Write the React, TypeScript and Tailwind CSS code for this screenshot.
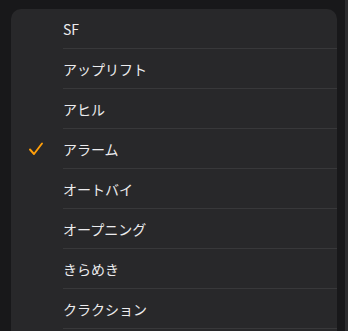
const items = [
  'SF',
  'アップリフト',
  'アヒル',
  'アラーム',
  'オートバイ',
  'オープニング',
  'きらめき',
  'クラクション',
]

const selected = 'アラーム'

function Check() {
  return (
    <svg width="16" height="16" viewBox="0 0 16 16" fill="none">
      <path d="M2 8.5 L6 13 L14 2.5" stroke="#ff9f0a" strokeWidth="1.9" strokeLinecap="round" strokeLinejoin="round" />
    </svg>
  )
}

export default function App() {
  return (
    <div className="relative w-[348px] h-[331px] overflow-hidden bg-[#18181a] pl-[11px] pt-[9px] font-['Noto_Sans_CJK_JP','Noto_Sans',sans-serif]">
      <div className="w-[326px] h-[340px] rounded-[10px] bg-[#28282a] overflow-hidden">
        {items.map((item) => (
          <div key={item} className="flex h-[40px]">
            <div className="w-[52px] shrink-0 flex items-center justify-center pr-[2px]">
              {item === selected && <Check />}
            </div>
            <div className="flex-1 flex items-center border-b border-[#38383a] text-[14px] text-[#ececee] leading-none">
              {item}
            </div>
          </div>
        ))}
      </div>
      <div className="absolute right-0 top-0 w-[3px] h-full bg-[#2c2c2e]" />
    </div>
  )
}
